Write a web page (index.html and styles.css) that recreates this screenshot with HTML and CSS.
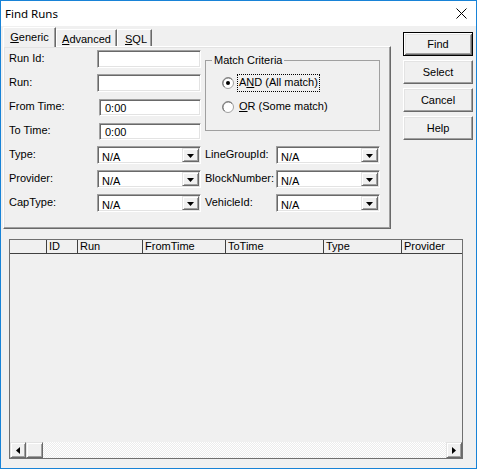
FILE: index.html
```html
<!DOCTYPE html>
<html>
<head>
<meta charset="utf-8">
<title>Find Runs</title>
<link rel="stylesheet" href="styles.css">
</head>
<body>
<div class="window">
  <div class="titlebar">
    <span class="title">Find Runs</span>
    <span class="close">
      <svg width="11" height="11" viewBox="0 0 11 11"><path d="M0.5 0.5 L10.5 10.5 M10.5 0.5 L0.5 10.5" stroke="#000" stroke-width="1" fill="none"/></svg>
    </span>
  </div>
  <div class="top">
    <div class="tabs-area">
      <div class="tabstrip">
        <div class="tab sel tab-generic"><span><u>G</u>eneric</span></div>
        <div class="tab tab-adv"><span><u>A</u>dvanced</span></div>
        <div class="tab tab-sql"><span><u>S</u>QL</span></div>
      </div>
      <div class="panel">
        <div class="left">
          <div class="row"><span class="lbl">Run Id:</span><div class="edit"></div></div>
          <div class="row"><span class="lbl">Run:</span><div class="edit"></div></div>
          <div class="row"><span class="lbl">From Time:</span><div class="edit time">0:00</div></div>
          <div class="row"><span class="lbl">To Time:</span><div class="edit time">0:00</div></div>
          <div class="row"><span class="lbl">Type:</span><div class="combo"><span class="val">N/A</span><span class="drop"><svg width="7" height="4" viewBox="0 0 7 4"><path d="M0 0 H7 L3.5 4 Z" fill="#000"/></svg></span></div></div>
          <div class="row"><span class="lbl">Provider:</span><div class="combo"><span class="val">N/A</span><span class="drop"><svg width="7" height="4" viewBox="0 0 7 4"><path d="M0 0 H7 L3.5 4 Z" fill="#000"/></svg></span></div></div>
          <div class="row"><span class="lbl">CapType:</span><div class="combo"><span class="val">N/A</span><span class="drop"><svg width="7" height="4" viewBox="0 0 7 4"><path d="M0 0 H7 L3.5 4 Z" fill="#000"/></svg></span></div></div>
        </div>
        <div class="right">
          <fieldset class="group">
            <legend>Match Criteria</legend>
            <div class="radio">
              <svg class="rb" width="12" height="12" viewBox="0 0 12 12">
                <circle cx="6" cy="6" r="5.5" fill="#fff" stroke="#a0a0a0"/>
                <path d="M2.2 9.8 A5 5 0 0 1 9.8 2.2" stroke="#696969" fill="none" transform="translate(0.3 0.3)"/>
                <circle cx="6" cy="6" r="2" fill="#000"/>
              </svg>
              <span class="rtext focus">A<u>N</u>D (All match)</span>
            </div>
            <div class="radio">
              <svg class="rb" width="12" height="12" viewBox="0 0 12 12">
                <circle cx="6" cy="6" r="5.5" fill="#fff" stroke="#a0a0a0"/>
                <path d="M2.2 9.8 A5 5 0 0 1 9.8 2.2" stroke="#696969" fill="none" transform="translate(0.3 0.3)"/>
              </svg>
              <span class="rtext"><u>O</u>R (Some match)</span>
            </div>
          </fieldset>
          <div class="rrows">
            <div class="row"><span class="lbl rl">LineGroupId:</span><div class="combo"><span class="val">N/A</span><span class="drop"><svg width="7" height="4" viewBox="0 0 7 4"><path d="M0 0 H7 L3.5 4 Z" fill="#000"/></svg></span></div></div>
            <div class="row"><span class="lbl rl">BlockNumber:</span><div class="combo"><span class="val">N/A</span><span class="drop"><svg width="7" height="4" viewBox="0 0 7 4"><path d="M0 0 H7 L3.5 4 Z" fill="#000"/></svg></span></div></div>
            <div class="row"><span class="lbl rl">VehicleId:</span><div class="combo"><span class="val">N/A</span><span class="drop"><svg width="7" height="4" viewBox="0 0 7 4"><path d="M0 0 H7 L3.5 4 Z" fill="#000"/></svg></span></div></div>
          </div>
        </div>
      </div>
    </div>
    <div class="buttons">
      <div class="btn default">Find</div>
      <div class="btn">Select</div>
      <div class="btn">Cancel</div>
      <div class="btn">Help</div>
    </div>
  </div>
  <div class="list">
    <div class="lhead">
      <div class="hc w0"></div>
      <div class="hc w1">ID</div>
      <div class="hc w2">Run</div>
      <div class="hc w3">FromTime</div>
      <div class="hc w4">ToTime</div>
      <div class="hc w5">Type</div>
      <div class="hc w6">Provider</div>
    </div>
    <div class="lbody"></div>
    <div class="hscroll">
      <div class="sbtn"><svg width="4" height="7" viewBox="0 0 4 7"><path d="M4 0 V7 L0 3.5 Z" fill="#000"/></svg></div>
      <div class="sbtn thumb"></div>
      <div class="track"></div>
      <div class="sbtn"><svg width="4" height="7" viewBox="0 0 4 7"><path d="M0 0 V7 L4 3.5 Z" fill="#000"/></svg></div>
    </div>
  </div>
</div>
</body>
</html>
```
FILE: styles.css
```css
* { box-sizing: border-box; }
html, body { margin: 0; padding: 0; }
body {
  font-family: "Liberation Sans", Arial, sans-serif;
  font-size: 11px;
  color: #000;
  background: #f0f0f0;
}
u { text-decoration: underline; text-underline-offset: 1px; }

.window {
  width: 477px;
  height: 469px;
  border: 1px solid #1883d7;
  background: #f0f0f0;
  display: flex;
  flex-direction: column;
  overflow: hidden;
}

.titlebar {
  flex: none;
  height: 25px;
  background: #fff;
  display: flex;
  align-items: center;
  justify-content: space-between;
  padding-left: 4px;
}
.title {
  font-family: "Noto Sans", "Open Sans", sans-serif;
  font-size: 11.5px;
}
.close {
  width: 30px;
  height: 25px;
  display: flex;
  align-items: center;
  justify-content: center;
}

.top {
  flex: none;
  display: flex;
  padding-left: 2px;
}
.tabs-area { width: 388px; }

.tabstrip {
  height: 20px;
  display: flex;
  align-items: flex-end;
  position: relative;
  z-index: 1;
}
.tab {
  height: 17px;
  border-top: 1px solid #fff;
  border-left: 1px solid #fff;
  border-right: 1px solid #696969;
  box-shadow: inset -1px 0 #a0a0a0;
  display: flex;
  justify-content: center;
  align-items: center;
  padding-top: 2px;
  white-space: nowrap;
}
.tab.sel {
  height: 20px;
  margin-bottom: -1px;
  background: #f0f0f0;
  padding-top: 0;
  padding-bottom: 2px;
}
.tab-generic { width: 53px; }
.tab-adv { width: 61px; }
.tab-sql { width: 35px; padding-left: 3px; }

.panel {
  height: 183px;
  border: 1px solid;
  border-color: #fff #696969 #696969 #fff;
  box-shadow: inset -1px -1px #a0a0a0, inset 1px 1px #e3e3e3;
  padding: 3px 0 0 5px;
  display: flex;
  align-items: flex-start;
}

.left {
  width: 192px;
  display: flex;
  flex-direction: column;
  gap: 6px;
}
.row {
  height: 18px;
  display: flex;
  align-items: center;
}
.lbl {
  width: 88px;
  flex: none;
  white-space: nowrap;
  line-height: 13px;
  margin-top: -2px;
}
.lbl.rl { width: 71px; }

.edit {
  width: 104px;
  height: 18px;
  background: #fff;
  border: 1px solid;
  border-color: #a0a0a0 #fff #fff #a0a0a0;
  box-shadow: inset 1px 1px #696969, inset -1px -1px #e3e3e3;
  line-height: 14px;
  padding: 1px 0 0 5px;
}
.edit.time {
  width: 102px;
  height: 17px;
  margin-left: 2px;
}

.combo {
  width: 104px;
  height: 18px;
  flex: none;
  background: #fff;
  border: 1px solid;
  border-color: #a0a0a0 #fff #fff #a0a0a0;
  box-shadow: inset 1px 1px #696969, inset -1px -1px #e3e3e3;
  padding: 1px;
  display: flex;
}
.combo .val {
  flex: 1;
  padding: 3px 0 0 3px;
  line-height: 12px;
}
.combo .drop {
  width: 17px;
  height: 14px;
  background: #f0f0f0;
  border: 1px solid;
  border-color: #e3e3e3 #696969 #696969 #e3e3e3;
  box-shadow: inset 1px 1px #fff, inset -1px -1px #a0a0a0;
  display: flex;
  align-items: center;
  justify-content: center;
  padding-top: 1px;
}

.right {
  width: 175px;
  margin-left: 4px;
  display: flex;
  flex-direction: column;
}
.group {
  margin: 4px 0 0 0;
  height: 77px;
  border: 1px solid #a0a0a0;
  padding: 8px 0 0 16px;
  min-width: 0;
}
.group legend {
  padding: 0 2px;
  margin-left: -10px;
  line-height: 13px;
}
.radio {
  height: 16px;
  display: flex;
  align-items: center;
  margin-bottom: 8px;
}
.rb { flex: none; margin-right: 4px; }
.rtext {
  padding: 1px 1px 2px 1px;
  line-height: 13px;
  white-space: nowrap;
}
.rtext.focus { outline: 1px dotted #000; outline-offset: 0; }

.rrows {
  margin-top: 15px;
  display: flex;
  flex-direction: column;
  gap: 6px;
}

.buttons {
  margin-left: 12px;
  padding-top: 6px;
  display: flex;
  flex-direction: column;
  gap: 4px;
}
.btn {
  width: 70px;
  height: 24px;
  border: 1px solid;
  border-color: #fff #696969 #696969 #fff;
  box-shadow: inset -1px -1px #a0a0a0, inset 1px 1px #e3e3e3;
  display: flex;
  align-items: center;
  justify-content: center;
  padding-bottom: 1px;
}
.btn.default {
  border-color: #000;
  box-shadow: inset 1px 1px #fff, inset -1px -1px #696969, inset 2px 2px #e3e3e3, inset -2px -2px #a0a0a0;
}

.list {
  flex: none;
  margin: 10px 0 0 8px;
  width: 454px;
  height: 220px;
  border: 1px solid #6f6f6f;
  display: flex;
  flex-direction: column;
}
.lhead {
  height: 14px;
  display: flex;
  border-bottom: 1px solid #404040;
  background: #f0f0f0;
}
.hc {
  flex: none;
  border-right: 1px solid #404040;
  line-height: 13px;
  padding-left: 2px;
  white-space: nowrap;
  overflow: hidden;
}
.w0 { width: 37px; }
.w1 { width: 31px; }
.w2 { width: 65px; }
.w3 { width: 83px; }
.w4 { width: 98px; }
.w5 { width: 78px; }
.w6 { flex: 1; border-right: none; }
.lbody { flex: 1; background: #f0f0f0; }
.hscroll {
  height: 16px;
  display: flex;
}
.sbtn {
  width: 16px;
  height: 16px;
  flex: none;
  background: #f0f0f0;
  border: 1px solid;
  border-color: #e3e3e3 #696969 #696969 #e3e3e3;
  box-shadow: inset 1px 1px #fff, inset -1px -1px #a0a0a0;
  display: flex;
  align-items: center;
  justify-content: center;
}
.sbtn.thumb { width: 17px; }
.track {
  flex: 1;
  background: repeating-conic-gradient(#fff 0 25%, #ececec 0 50%) 0 0 / 2px 2px;
}
```
